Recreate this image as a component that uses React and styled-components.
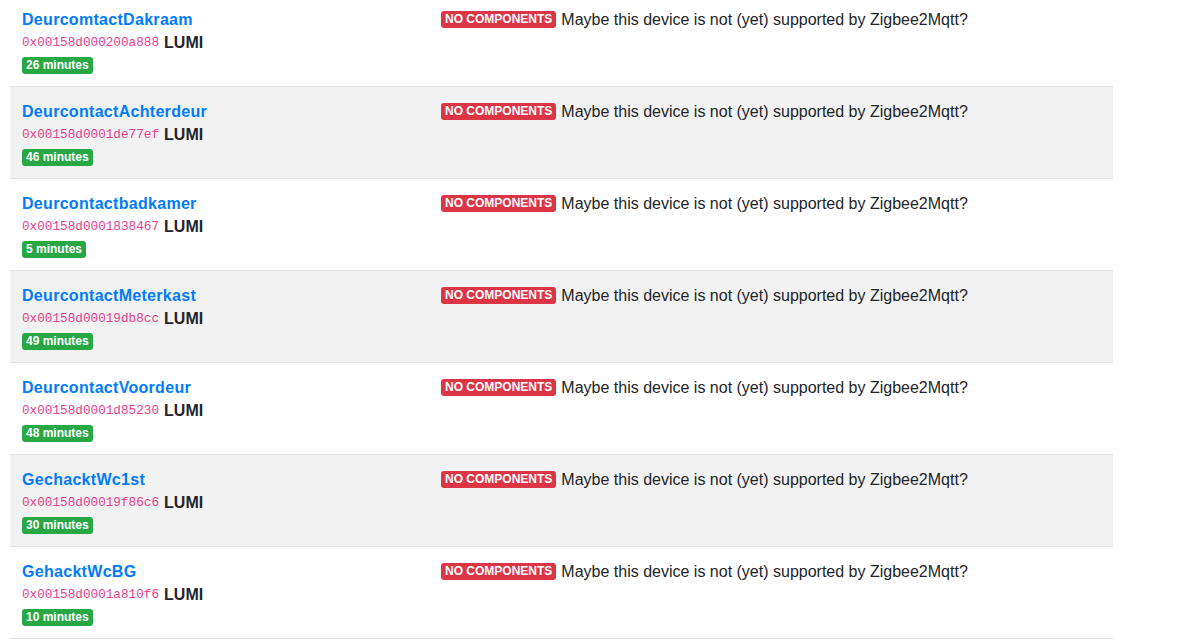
import React from 'react'
import styled, { createGlobalStyle } from 'styled-components'

const GlobalStyle = createGlobalStyle`
    body{
        margin:0;
        padding:0 10px;
        background:#fff;
        color:#212529;
        font-family:"Liberation Sans", Arial, sans-serif;
        font-size:16px;
        line-height:1.5;
        overflow:hidden;
    }
`

const Table = styled.table`
    width:1103px;
    margin-top:-5px;
    border-collapse:collapse;
`

const Row = styled.tr`
    background-color:${props => props.striped ? 'rgba(0,0,0,.05)' : 'transparent'};
    border-bottom:1px solid #dee2e6;
`

const Cell = styled.td`
    padding:12px;
    vertical-align:top;
    width:${props => props.w || 'auto'};
`

const Name = styled.a`
    display:block;
    height:24px;
    padding-top:1px;
    box-sizing:border-box;
    color:#007bff;
    font-weight:700;
    font-size:16px;
    letter-spacing:0.3px;
    line-height:24px;
    text-decoration:none;
    cursor:pointer;
`

const Info = styled.div`
    height:24px;
    display:flex;
    align-items:center;
    gap:5px;
`

const Code = styled.code`
    font-family:"Liberation Mono", monospace;
    font-size:12.7px;
    color:#e83e8c;
`

const Vendor = styled.span`
    font-weight:700;
`

const BadgeLine = styled.div`
    height:19px;
    padding-top:2px;
    box-sizing:border-box;
`

const Badge = styled.span`
    display:inline-block;
    height:17px;
    padding:0 4px;
    box-sizing:border-box;
    border-radius:3px;
    background-color:${props => props.red ? '#dc3545' : '#28a745'};
    color:#fff;
    font-size:12px;
    font-weight:700;
    line-height:17px;
    white-space:nowrap;
    vertical-align:top;
`

const Message = styled.div`
    height:24px;
    display:flex;
    align-items:center;
    gap:5px;
    padding-top:1px;
    box-sizing:border-box;
`

const devices = [
    {name:'DeurcomtactDakraam', id:'0x00158d000200a888', seen:'26 minutes'},
    {name:'DeurcontactAchterdeur', id:'0x00158d0001de77ef', seen:'46 minutes'},
    {name:'Deurcontactbadkamer', id:'0x00158d0001838467', seen:'5 minutes'},
    {name:'DeurcontactMeterkast', id:'0x00158d00019db8cc', seen:'49 minutes'},
    {name:'DeurcontactVoordeur', id:'0x00158d0001d85230', seen:'48 minutes'},
    {name:'GechacktWc1st', id:'0x00158d00019f86c6', seen:'30 minutes'},
    {name:'GehacktWcBG', id:'0x00158d0001a810f6', seen:'10 minutes'},
]

function App() {
    return (
        <>
        <GlobalStyle/>
        <Table>
            <tbody>
                {
                    devices.map((item,index)=>(
                        <Row key={item.id} striped={index % 2 === 1}>
                            <Cell w="395px">
                                <Name>{item.name}</Name>
                                <Info>
                                    <Code>{item.id}</Code>
                                    <Vendor>LUMI</Vendor>
                                </Info>
                                <BadgeLine>
                                    <Badge>{item.seen}</Badge>
                                </BadgeLine>
                            </Cell>
                            <Cell>
                                <Message>
                                    <Badge red>NO COMPONENTS</Badge>
                                    <span>Maybe this device is not (yet) supported by Zigbee2Mqtt?</span>
                                </Message>
                            </Cell>
                        </Row>
                    ))
                }
            </tbody>
        </Table>
        </>
    )
}

export default App
